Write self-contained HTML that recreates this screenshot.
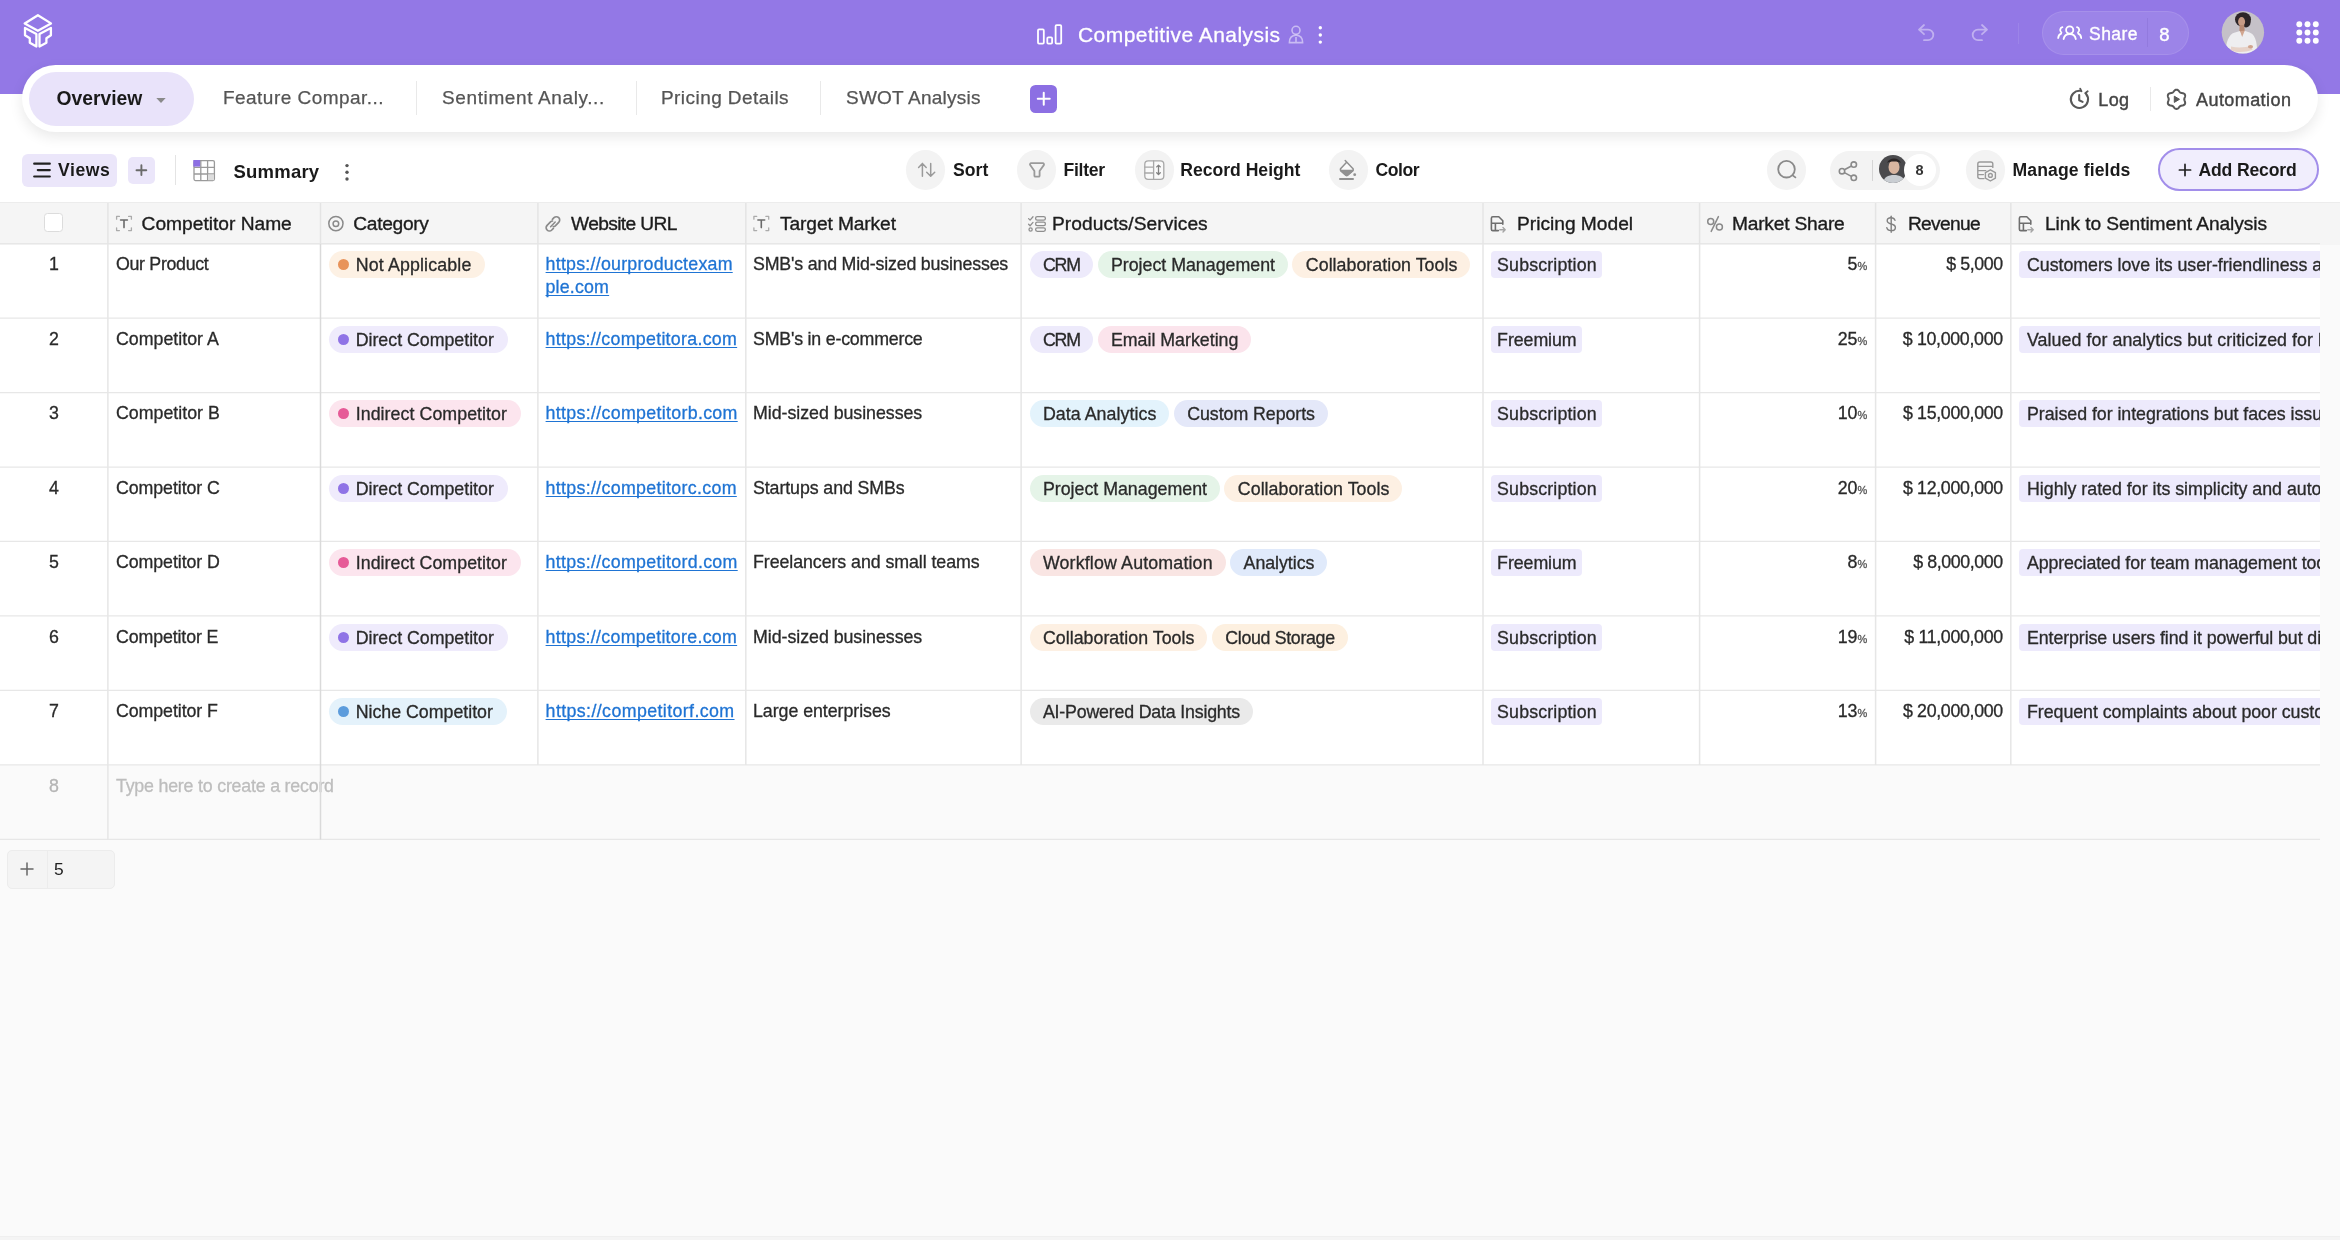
<!DOCTYPE html>
<html lang="en"><head><meta charset="utf-8"><title>Competitive Analysis</title>
<style>
*{box-sizing:border-box;margin:0;padding:0}
html,body{width:2340px;height:1240px;overflow:hidden;background:#FAFAFA}
body{position:relative;font-family:"Liberation Sans",sans-serif;color:#222;-webkit-font-smoothing:antialiased;will-change:transform}
.abs{position:absolute}
svg{position:absolute;overflow:visible}
#top{position:absolute;left:0;top:0;width:2340px;height:94px;background:#9378E6}
#white{position:absolute;left:0;top:94px;width:2340px;height:109px;background:#fff}
#tabs{position:absolute;left:22px;top:65px;width:2296px;height:67px;border-radius:34px;background:#fff;box-shadow:0 5px 14px rgba(0,0,0,.09)}
.tx{position:absolute;white-space:nowrap;line-height:1}
.tab{font-size:19px;color:#555;top:88px;-webkit-text-stroke:.25px}
.sep{position:absolute;width:1px;background:#E9E9E9}
.tb{font-weight:bold;font-size:17.600px;color:#1a1a1a;top:162px}
.circ{position:absolute;width:39.400px;height:39.400px;border-radius:50%;background:#F3F3F3;top:150.400px}
/* grid */
#ghead{position:absolute;left:0;top:202px;width:2340px;height:43px;background:#F5F5F5;border-top:1px solid #ECECEC}
.hd{position:absolute;top:214.4px;font-size:19.2px;color:#1c1c1c;white-space:nowrap;line-height:1;-webkit-text-stroke:.35px #1c1c1c}
.vl{position:absolute;width:1px;background:#E6E6E6;top:203px;height:562px}
.row{position:absolute;left:0;width:2320px;overflow:hidden}
.c{position:absolute;top:9.9px;font-size:17.8px;line-height:23px;color:#2a2a2a;white-space:nowrap;-webkit-text-stroke:.3px}
.num{left:0;width:108px;text-align:center}
.r{text-align:right}
.r small{font-size:11px;color:#555}
.url{color:#1F74D4}
.url u{text-decoration-thickness:1.2px;text-underline-offset:2px;text-decoration-skip-ink:none}
.pill{position:absolute;top:8px;height:27px;border-radius:14px;font-size:17.8px;line-height:29px;color:#2a2a2a;white-space:nowrap;-webkit-text-stroke:.3px}
.cat{padding:0 11.700px 0 28.700px}
.cat i{position:absolute;left:9px;top:8px;width:11px;height:11px;border-radius:50%}
.tags{position:absolute;top:8px;white-space:nowrap;display:flex;gap:4.4px}
.tg{position:static;display:inline-block;padding:0 13.1px 0 13.4px}
.chip{position:absolute;top:8px;height:27px;border-radius:4px;background:#EDEAFC;font-size:17.8px;line-height:29px;color:#2a2a2a;padding:0 7.7px;white-space:nowrap;-webkit-text-stroke:.3px}
.lk{padding-left:8px}
.chip:not(.lk){padding-right:3.7px}
#title{margin-left:0.00px;letter-spacing:0.436px}
#share{margin-left:-1.40px;letter-spacing:0.405px}
#s8{margin-left:-0.70px;letter-spacing:0.000px}
#ov{margin-left:0.00px;letter-spacing:0.000px}
#t1{margin-left:1.00px;letter-spacing:0.461px}
#t2{margin-left:0.00px;letter-spacing:0.619px}
#t3{margin-left:0.00px;letter-spacing:0.437px}
#t4{margin-left:0.00px;letter-spacing:0.240px}
#log{margin-left:-0.20px;letter-spacing:0.360px}
#auto{margin-left:0.00px;letter-spacing:0.430px}
#views{margin-left:0.00px;letter-spacing:0.585px}
#summary{margin-left:0.00px;letter-spacing:0.210px}
#sort{margin-left:0.00px;letter-spacing:0.060px}
#filter{margin-left:0.00px;letter-spacing:-0.270px}
#rh{margin-left:-0.80px;letter-spacing:-0.006px}
#color{margin-left:0.00px;letter-spacing:-0.473px}
#mf{margin-left:0.00px;letter-spacing:0.120px}
#ar{margin-left:0.00px;letter-spacing:-0.170px}
#c8{margin-left:0.00px;letter-spacing:0.000px}
#h1{margin-left:-0.40px;letter-spacing:-0.013px}
#h2{margin-left:-0.70px;letter-spacing:-0.320px}
#h3{margin-left:0.00px;letter-spacing:-0.630px}
#h4{margin-left:1.00px;letter-spacing:-0.111px}
#h5{margin-left:-1.00px;letter-spacing:0.068px}
#h6{margin-left:0.00px;letter-spacing:-0.015px}
#h7{margin-left:-1.10px;letter-spacing:-0.213px}
#h8{margin-left:-1.10px;letter-spacing:-0.690px}
#h9{margin-left:0.00px;letter-spacing:-0.075px}
#f5{margin-left:0.00px;letter-spacing:0.000px}
#Subscription{margin-left:-1.60px;letter-spacing:0.156px}
#Freemium{margin-left:-1.60px;letter-spacing:-0.069px}
#CRM{margin-left:0.00px;letter-spacing:-1.125px}
#Analytics{margin-left:0.00px;letter-spacing:-0.041px}
</style></head><body>
<div id="top"></div>
<div id="white"></div>
<div id="tabs"></div>

<!-- top bar -->
<svg style="left:0;top:0" width="80" height="60" viewBox="0 0 80 60" fill="none" stroke="#fff" stroke-width="2.300" stroke-linejoin="round" stroke-linecap="round">
<path d="M37.9 15.2 L51 23.4 L37.9 30.8 L24.7 23.4 Z"/>
<path d="M25 28 L36.4 34 L36.4 46.6 L29.8 42.8 L29.8 38.2 L25 35.2 Z"/>
<path d="M50.9 28 L39.5 34 L39.5 46.6 L46.4 42.8 L46.4 38.2 L50.9 35.2 Z"/>
</svg>
<svg style="left:1030px;top:15px" width="40" height="40" viewBox="1030 15 40 40" fill="none" stroke="#fff" stroke-width="1.8">
<rect x="1038" y="29.4" width="5.8" height="14.2" rx="1"/><rect x="1047.3" y="37.4" width="4.8" height="6.2" rx="1"/><rect x="1055.6" y="25.2" width="5.6" height="18.4" rx="1"/>
</svg>
<div class="tx" style="left:1078px;top:23.5px;font-size:21px;color:#fff;-webkit-text-stroke:.3px #fff" id="title">Competitive Analysis</div>
<svg style="left:1285px;top:20px" width="24" height="30" viewBox="1285 20 24 30" fill="none" stroke="rgba(255,255,255,.5)" stroke-width="1.6">
<circle cx="1296" cy="30.3" r="4"/><path d="M1289.4 42.6 c0-4.6 2.6-7.4 6.6-7.4 s6.6 2.8 6.6 7.4 Z M1296 37v5.6"/>
</svg>
<svg style="left:1315px;top:22px" width="10" height="26" viewBox="1315 22 10 26" fill="#fff"><circle cx="1320.3" cy="27.8" r="1.7"/><circle cx="1320.3" cy="35" r="1.7"/><circle cx="1320.3" cy="42.1" r="1.7"/></svg>
<svg style="left:1910px;top:18px" width="90" height="30" viewBox="1910 18 90 30" fill="none" stroke="rgba(255,255,255,.42)" stroke-width="1.8" stroke-linecap="round" stroke-linejoin="round">
<path d="M1924 25 l-5 4.6 5 4.6 M1919.4 29.6 h8.6 a5.3 5.3 0 0 1 0 10.6 h-4"/>
<path d="M1982 25 l5 4.6 -5 4.6 M1986.600 29.6 h-8.6 a5.3 5.3 0 0 0 0 10.6 h4"/>
</svg>
<div class="sep" style="left:2018px;top:23px;height:21px;background:rgba(255,255,255,.09)"></div>
<div class="abs" style="left:2041.5px;top:10.5px;width:147px;height:44px;border-radius:22px;background:rgba(255,255,255,.09);border:1.500px solid rgba(255,255,255,.1)"></div>
<svg style="left:2055px;top:22px" width="30" height="22" viewBox="2055 22 30 22" fill="none" stroke="#fff" stroke-width="1.8" stroke-linecap="round">
<circle cx="2069.7" cy="30" r="3.6"/><path d="M2063.6 39 c.6-3.400 3-5 6.100-5 s5.500 1.600 6.100 5"/>
<path d="M2062.4 27.200 a3 3 0 0 0-1 5.300 M2058.200 38 c.2-2.400 1.200-3.800 3-4.400"/>
<path d="M2077 27.200 a3 3 0 0 1 1 5.300 M2081.200 38 c-.2-2.400-1.200-3.800-3-4.400"/>
</svg>
<div class="tx" style="left:2090.5px;top:26px;font-size:17.500px;color:#fff;-webkit-text-stroke:.35px #fff" id="share">Share</div>
<div class="sep" style="left:2147px;top:18px;height:29px;background:rgba(70,45,150,.11)"></div>
<div class="tx" style="left:2160px;top:26px;font-size:18.500px;color:#fff;-webkit-text-stroke:.4px #fff" id="s8">8</div>
<!-- avatar -->
<svg style="left:2221px;top:11px" width="44" height="44" viewBox="0 0 44 44">
<defs><clipPath id="av"><circle cx="21.900" cy="21.300" r="21.200"/></clipPath></defs>
<g clip-path="url(#av)"><rect width="44" height="44" fill="#C5C1C8"/>
<ellipse cx="22" cy="8.600" rx="8" ry="7.400" fill="#2d2528"/><ellipse cx="25" cy="11.500" rx="4.500" ry="5" fill="#2d2528"/>
<ellipse cx="20.600" cy="10.800" rx="3.500" ry="4.700" fill="#c79a84"/>
<path d="M18.600 14 h4.600 l.6 7 h-5.400 Z" fill="#b98a73"/>
<path d="M4.500 44 c0-12 3-21 9.500-22.500 l5-1.500 2.200 4 2.400-4.200 5 1.800 c6 2 8 11 7.400 22.400 Z" fill="#EEEEF0"/>
<path d="M19 20 l2.200 6 2.400-6.200 Z" fill="#d2a690"/>
<path d="M10 35.600 c6 1.400 14 1.400 20.500-1 l1 4.200 c-7 2.800-15 2.800-21.500 1 Z" fill="#e6d2c8"/>
<ellipse cx="29.500" cy="35.800" rx="2.600" ry="1.700" fill="#d0a48e"/>
</g></svg>
<svg style="left:2296px;top:21px" width="24" height="24" viewBox="2296 21 24 24" fill="#fff">
<circle cx="2299.3" cy="24.2" r="2.950"/><circle cx="2307.5" cy="24.2" r="2.950"/><circle cx="2315.8" cy="24.2" r="2.950"/><circle cx="2299.3" cy="32.5" r="2.950"/><circle cx="2307.5" cy="32.5" r="2.950"/><circle cx="2315.8" cy="32.5" r="2.950"/><circle cx="2299.3" cy="40.7" r="2.950"/><circle cx="2307.5" cy="40.7" r="2.950"/><circle cx="2315.8" cy="40.7" r="2.950"/>
</svg>

<!-- tabs -->
<div class="abs" style="left:29px;top:71.800px;width:165px;height:54px;border-radius:27px;background:#E9E3FA"></div>
<div class="tx" style="left:56.500px;top:89.300px;font-size:19.300px;font-weight:bold;color:#1a1a1a" id="ov">Overview</div>
<svg style="left:154px;top:94.800px" width="14" height="10" viewBox="0 0 14 10"><path d="M2.300 3 h9.400 l-4.700 5 Z" fill="#8a8a8a"/></svg>
<div class="tx tab" style="left:222px" id="t1">Feature Compar...</div>
<div class="sep" style="left:416px;top:81px;height:34px"></div>
<div class="tx tab" style="left:442px" id="t2">Sentiment Analy...</div>
<div class="sep" style="left:636px;top:81px;height:34px"></div>
<div class="tx tab" style="left:661px" id="t3">Pricing Details</div>
<div class="sep" style="left:820px;top:81px;height:34px"></div>
<div class="tx tab" style="left:846px" id="t4">SWOT Analysis</div>
<div class="abs" style="left:1029.500px;top:85px;width:27.500px;height:27.500px;border-radius:5.500px;background:#8C6FE3"></div>
<svg style="left:1029.500px;top:85px" width="27.500" height="27.500" viewBox="0 0 27.500 27.500" stroke="#fff" stroke-width="2" stroke-linecap="round"><path d="M13.750 7.800 v12 M7.750 13.800 h12"/></svg>
<svg style="left:2066px;top:86px" width="26" height="26" viewBox="2066 86 26 26" fill="none" stroke="#585858" stroke-width="2.100" stroke-linecap="round" stroke-linejoin="round">
<path d="M2086 93.800 a8.600 8.600 0 1 1-5.600-3"/><path d="M2079.200 95 v5.200 l3.400 1.700"/><path d="M2080.200 88.600 l1.300 2.700 M2087.700 91.300 l-2.500 1.900" stroke-width="1.800"/>
</svg>
<div class="tx" style="left:2098.500px;top:91px;font-size:18px;color:#444;-webkit-text-stroke:.4px" id="log">Log</div>
<div class="sep" style="left:2150px;top:87px;height:24px"></div>
<svg style="left:2164px;top:87px" width="26" height="26" viewBox="2164 87 26 26" fill="none" stroke="#585858" stroke-width="2" stroke-linejoin="round">
<path d="M2176.50 89.65 L2177.13 89.74 L2177.72 90.01 L2178.27 90.41 L2178.75 90.90 L2179.18 91.41 L2179.57 91.88 L2179.96 92.28 L2180.38 92.59 L2180.85 92.80 L2181.39 92.93 L2182.00 93.03 L2182.65 93.15 L2183.31 93.32 L2183.94 93.59 L2184.46 93.98 L2184.86 94.47 L2185.09 95.06 L2185.16 95.71 L2185.08 96.39 L2184.90 97.05 L2184.68 97.67 L2184.46 98.25 L2184.31 98.79 L2184.25 99.30 L2184.31 99.81 L2184.46 100.35 L2184.68 100.93 L2184.90 101.55 L2185.08 102.21 L2185.16 102.89 L2185.09 103.54 L2184.86 104.12 L2184.46 104.62 L2183.94 105.01 L2183.31 105.28 L2182.65 105.45 L2182.00 105.57 L2181.39 105.67 L2180.85 105.80 L2180.38 106.01 L2179.96 106.32 L2179.57 106.72 L2179.18 107.19 L2178.75 107.70 L2178.27 108.19 L2177.72 108.59 L2177.13 108.86 L2176.50 108.95 L2175.87 108.86 L2175.28 108.59 L2174.73 108.19 L2174.25 107.70 L2173.82 107.19 L2173.43 106.72 L2173.04 106.32 L2172.62 106.01 L2172.15 105.80 L2171.61 105.67 L2171.00 105.57 L2170.35 105.45 L2169.69 105.28 L2169.06 105.01 L2168.54 104.62 L2168.14 104.12 L2167.91 103.54 L2167.84 102.89 L2167.92 102.21 L2168.10 101.55 L2168.32 100.93 L2168.54 100.35 L2168.69 99.81 L2168.75 99.30 L2168.69 98.79 L2168.54 98.25 L2168.32 97.67 L2168.10 97.05 L2167.92 96.39 L2167.84 95.71 L2167.91 95.06 L2168.14 94.47 L2168.54 93.98 L2169.06 93.59 L2169.69 93.32 L2170.35 93.15 L2171.00 93.03 L2171.61 92.93 L2172.15 92.80 L2172.62 92.59 L2173.04 92.28 L2173.43 91.88 L2173.82 91.41 L2174.25 90.90 L2174.73 90.41 L2175.28 90.01 L2175.87 89.74 Z"/>
<path d="M2174.300 96.200 l5.200 3.100 -5.200 3.100 Z" fill="#585858" stroke-width="1"/>
</svg>
<div class="tx" style="left:2196px;top:91px;font-size:18px;color:#444;-webkit-text-stroke:.4px" id="auto">Automation</div>

<!-- toolbar -->
<div class="abs" style="left:22px;top:153.500px;width:95px;height:33px;border-radius:6px;background:#EBE6FA"></div>
<svg style="left:32px;top:160px" width="20" height="20" viewBox="32 160 20 20" stroke="#222" stroke-width="2.200" stroke-linecap="round"><path d="M34.200 163.700 h15.600 M37.800 170.100 h12 M34.200 176.500 h15.600"/></svg>
<div class="tx tb" style="left:58px" id="views">Views</div>
<div class="abs" style="left:128px;top:157px;width:27px;height:26.500px;border-radius:5px;background:#EBE6FA"></div>
<svg style="left:128px;top:157px" width="27" height="26.500" viewBox="0 0 27 26.500" stroke="#6a6a6a" stroke-width="1.900" stroke-linecap="round"><path d="M13.400 8.300 v9.800 M8.500 13.200 h9.800"/></svg>
<div class="sep" style="left:175px;top:155px;height:30px;background:#E4E4E4"></div>
<svg style="left:192px;top:158px" width="26" height="26" viewBox="192 158 26 26" fill="none" stroke="#9a9a9a" stroke-width="1.300">
<rect x="194" y="160.600" width="20.400" height="20" rx="1.500"/><path d="M200.800 160.600 v20 M207.600 160.600 v20 M194 167.300 h20.400 M194 174 h20.400"/>
<rect x="193.300" y="160" width="6.800" height="6.600" fill="#8C6FE3" stroke="none"/><rect x="208" y="174.400" width="6" height="5.800" fill="#ddd" stroke="none"/>
</svg>
<div class="tx" style="left:233.500px;top:162.500px;font-weight:bold;font-size:18.500px;color:#1a1a1a" id="summary">Summary</div>
<svg style="left:342px;top:160px" width="10" height="24" viewBox="342 160 10 24" fill="#555"><circle cx="347" cy="165.600" r="1.700"/><circle cx="347" cy="172.300" r="1.700"/><circle cx="347" cy="179" r="1.700"/></svg>

<div class="circ" style="left:906px"></div>
<svg style="left:915px;top:160px" width="24" height="20" viewBox="915 160 24 20" fill="none" stroke="#9a9a9a" stroke-width="1.500" stroke-linecap="round" stroke-linejoin="round">
<path d="M922.400 176.200 v-12.600 M918.600 167.400 l3.800-3.900 3.800 3.900 M930.700 163.400 v12.600 M926.700 172.300 l4 3.900 4-3.900"/></svg>
<div class="tx tb" style="left:953px" id="sort">Sort</div>
<div class="circ" style="left:1017px"></div>
<svg style="left:1026px;top:160px" width="24" height="20" viewBox="1026 160 24 20" fill="none" stroke="#9a9a9a" stroke-width="1.800" stroke-linejoin="round">
<path d="M1031.200 163.200 h11.600 a1.200 1.200 0 0 1 1 1.900 l-4.200 6 v4.600 a1 1 0 0 1-1 1 h-3.200 a1 1 0 0 1-1-1 v-4.600 l-4.200-6 a1.200 1.200 0 0 1 1-1.900 Z"/></svg>
<div class="tx tb" style="left:1063.500px" id="filter">Filter</div>
<div class="circ" style="left:1134.500px"></div>
<svg style="left:1142px;top:158px" width="26" height="24" viewBox="1142 158 26 24" fill="none" stroke="#a8a8a8" stroke-width="1.300" stroke-linecap="round" stroke-linejoin="round">
<rect x="1144.800" y="160.900" width="19" height="18.400" rx="3.400" fill="#F9F9F9"/><path d="M1153.600 160.900 v18.400 M1144.800 167.100 h8.800 M1144.800 173 h8.800"/>
<path d="M1158.500 165.200 v9.200 M1156.700 166.900 l1.800-1.800 1.800 1.800 M1156.700 172.800 l1.800 1.800 1.800-1.800" stroke="#808080"/></svg>
<div class="tx tb" style="left:1181px" id="rh">Record Height</div>
<div class="circ" style="left:1329px"></div>
<svg style="left:1336px;top:158px" width="26" height="26" viewBox="1336 158 26 26" fill="none" stroke="#909090" stroke-width="1.500" stroke-linejoin="round" stroke-linecap="round">
<path d="M1345.200 160.600 l7.600 7.800 a1.400 1.400 0 0 1 0 2 l-5 4.600 a1.600 1.600 0 0 1-2.200 0 l-4.800-4.600 a1.400 1.400 0 0 1 0-2 l5.600-6" fill="#F9F9F9"/>
<path d="M1340.600 170.600 h12.400 l-5.400 4.600 a1.400 1.400 0 0 1-1.800 0 Z" fill="#909090"/><path d="M1340 179 h13" stroke-width="2"/><circle cx="1354.700" cy="174.700" r="1.400" fill="#909090" stroke="none"/></svg>
<div class="tx tb" style="left:1375.500px" id="color">Color</div>

<div class="circ" style="left:1767px"></div>
<svg style="left:1774px;top:158px" width="26" height="26" viewBox="1774 158 26 26" fill="none" stroke="#8a8a8a" stroke-width="1.800" stroke-linecap="round"><circle cx="1786.500" cy="169.200" r="8.300"/><path d="M1793 175.600 l2.400 1.800"/></svg>
<div class="abs" style="left:1830px;top:150.500px;width:110px;height:39px;border-radius:20px;background:#F3F3F3"></div>
<svg style="left:1836px;top:159px" width="24" height="24" viewBox="1836 159 24 24" fill="none" stroke="#8a8a8a" stroke-width="1.600"><circle cx="1853.800" cy="164.600" r="2.700"/><circle cx="1842" cy="171.200" r="2.700"/><circle cx="1853.800" cy="177.800" r="2.700"/><path d="M1844.400 169.800 l7-3.800 M1844.400 172.600 l7 3.800"/></svg>
<div class="sep" style="left:1871.500px;top:160px;height:21px;background:#D5D5D5"></div>
<svg style="left:1879px;top:155px" width="28" height="28" viewBox="0 0 28 28"><defs><clipPath id="av2"><circle cx="14" cy="14" r="14"/></clipPath></defs>
<g clip-path="url(#av2)"><rect width="28" height="28" fill="#4a4a4d"/><ellipse cx="15" cy="12" rx="5.500" ry="7" fill="#d8b5a0"/><path d="M8 8 c2-6 12-6 14 0 c-2-2-12-2-14 0Z" fill="#2a2425"/><path d="M4 28 c1-6 5-8 11-8 s10 2 11 8Z" fill="#c9cdd2"/></g></svg>
<div class="abs" style="left:1904px;top:154px;width:32px;height:32px;border-radius:50%;background:#fff"></div>
<div class="tx" style="left:1915.500px;top:162.500px;font-size:14.500px;font-weight:bold;color:#333" id="c8">8</div>
<div class="circ" style="left:1966px"></div>
<svg style="left:1974px;top:158px" width="26" height="26" viewBox="1974 158 26 26" fill="none" stroke="#9a9a9a" stroke-width="1.400" stroke-linejoin="round" stroke-linecap="round">
<path d="M1984 178.600 h-4.200 a2 2 0 0 1-2-2 v-12.600 a2 2 0 0 1 2-2 h11 a2 2 0 0 1 2 2 v3.400 M1977.800 166.400 h15 M1977.800 170.600 h8 M1977.800 174.600 h5.600"/>
<path d="M1990.400 169.800 l5 2.800 v5.600 l-5 2.800 -5-2.800 v-5.600 Z"/><circle cx="1990.400" cy="175.400" r="1.900"/></svg>
<div class="tx tb" style="left:2012.500px" id="mf">Manage fields</div>
<div class="abs" style="left:2158px;top:148px;width:160.500px;height:43px;border-radius:22px;background:#F1EEFD;border:2px solid #A28EEA"></div>
<svg style="left:2178px;top:163px" width="14" height="14" viewBox="0 0 14 14" stroke="#222" stroke-width="1.700" stroke-linecap="round"><path d="M7 1.400 v11.200 M1.400 7 h11.200"/></svg>
<div class="tx tb" style="left:2198.500px" id="ar">Add Record</div>

<!-- grid header -->
<div id="ghead"></div>
<div class="abs" style="left:44.300px;top:213.300px;width:18.500px;height:18.500px;border-radius:3.500px;background:#fff;border:1px solid #DCDCDC"></div>
<div class="hd" style="left:142px" id="h1">Competitor Name</div>
<div class="hd" style="left:354px" id="h2">Category</div>
<div class="hd" style="left:571px" id="h3">Website URL</div>
<div class="hd" style="left:779px" id="h4">Target Market</div>
<div class="hd" style="left:1053px" id="h5">Products/Services</div>
<div class="hd" style="left:1517px" id="h6">Pricing Model</div>
<div class="hd" style="left:1733px" id="h7">Market Share</div>
<div class="hd" style="left:1909px" id="h8">Revenue</div>
<div class="hd" style="left:2045px" id="h9">Link to Sentiment Analysis</div>
<svg style="left:0;top:203px" width="2340" height="40" viewBox="0 203 2340 40" fill="none" stroke-linecap="round" stroke-linejoin="round">
<!-- text icon 1 -->
<g id="ticon"><path d="M116.600 219.200 v-2.800 h2.800 M128.600 216.400 h2.800 v2.800 M131.400 227.800 v2.800 h-2.800 M119.400 230.600 h-2.800 v-2.800" stroke="#ababab" stroke-width="1.300"/>
<path d="M120.600 220 h6.800 M124 220 v7.600" stroke="#6a6a6a" stroke-width="1.600"/></g>
<use href="#ticon" x="637.300"/>
<!-- category -->
<circle cx="335.900" cy="223.600" r="7.100" stroke="#8a8a8a" stroke-width="1.500"/><circle cx="335.900" cy="223.700" r="2.800" stroke="#8a8a8a" stroke-width="1.500"/>
<!-- link -->
<g stroke="#8a8a8a" stroke-width="1.700"><path d="M552.400 219.300 l1.600-1.600 a3.300 3.300 0 0 1 4.700 4.700 l-3.400 3.400 a3.300 3.300 0 0 1-2 .9"/><path d="M553.400 228.400 l-1.600 1.600 a3.300 3.300 0 0 1-4.700-4.700 l3.400-3.400 a3.300 3.300 0 0 1 2-.9" /><path d="M550.600 226.800 l4.600-4.800" stroke-width="1.500"/></g>
<!-- multi-select -->
<g stroke="#8f8f8f" stroke-width="1.300"><path d="M1028.600 218.600 l1.500 1.500 2.900-3.300 M1028.600 224.200 l1.500 1.500 2.900-3.300"/><circle cx="1030.600" cy="229.500" r="1.600"/>
<rect x="1035.600" y="216.600" width="9.800" height="3.500" rx="1.700"/><rect x="1035.600" y="222.200" width="9.800" height="3.500" rx="1.700"/><rect x="1035.600" y="227.800" width="9.800" height="3.500" rx="1.700"/></g>
<!-- lookup icons -->
<g id="lk"><path d="M1498.400 230.600 h-5.600 a1.400 1.400 0 0 1-1.400-1.400 v-11 a1.400 1.400 0 0 1 1.400-1.400 h6 l4 4 v3.400 M1491.400 223.200 h11.400 M1495.400 223.200 v7.400" stroke="#6e6e6e" stroke-width="1.600"/>
<path d="M1499.800 229.800 h4.800 M1503 227.600 l2.200 2.200 -2.200 2.200" stroke="#a5a5a5" stroke-width="1.400"/></g>
<use href="#lk" x="528"/>
<!-- percent -->
<g stroke="#8a8a8a" stroke-width="1.500"><circle cx="1710.700" cy="221.600" r="3"/><circle cx="1719.400" cy="227" r="3"/><path d="M1718.400 216.600 l-7.200 14.800"/></g>
<!-- dollar -->
<g stroke="#808080" stroke-width="1.400"><path d="M1895 220.400 c-.6-1.800-2-2.600-4-2.600 c-2.200 0-3.800 1.100-3.800 3 c0 4.400 8.200 2 8.200 6.600 c0 2-1.800 3.200-4.200 3.200 c-2.400 0-4-1-4.400-3"/><path d="M1891.200 216.200 v16"/></g>
</svg>


<!-- rows -->
<div class="abs" style="left:0;top:245px;width:2320px;height:520px;background:#fff"></div>
<div class="row" style="top:243px;height:75px">
<div class="c num"><span style="position:relative;left:0.00px;letter-spacing:0.000px">1</span></div>
<div class="c t" style="left:116px"><span style="position:relative;left:0.00px;letter-spacing:-0.306px">Our Product</span></div>
<div class="pill cat" style="left:329px;background:#FDF1E4"><i style="background:#E8935A"></i><span style="position:relative;left:-2.00px;letter-spacing:0.152px">Not Applicable</span></div>
<div class="c url" style="left:545.5px"><u><span style="position:relative;left:0.10px;letter-spacing:0.239px">https://ourproductexam</span></u><br><u><span style="position:relative;left:0.00px;letter-spacing:0.195px">ple.com</span></u></div>
<div class="c t" style="left:754px"><span style="position:relative;left:-1.00px;letter-spacing:-0.176px">SMB&#x27;s and Mid-sized businesses</span></div>
<div class="tags" style="left:1029.5px"><span class="pill tg" style="background:#EDEAFB"><span style="position:relative;left:0.00px;letter-spacing:-1.125px">CRM</span></span><span class="pill tg" style="background:#E5F4E8"><span style="position:relative;left:0.00px;letter-spacing:-0.000px">Project Management</span></span><span class="pill tg" style="background:#FDF0E3"><span style="position:relative;left:0.00px;letter-spacing:0.030px">Collaboration Tools</span></span></div>
<div class="chip" style="left:1491px"><span style="position:relative;left:-1.60px;letter-spacing:0.156px">Subscription</span></div>
<div class="c r" style="right:452.79999999999995px"><span style="position:relative;left:0.00px;letter-spacing:0.000px">5</span><small>%</small></div>
<div class="c r" style="right:317.20000000000005px"><span style="position:relative;left:0.00px;letter-spacing:-0.390px">$ 5,000</span></div>
<div class="chip lk" style="left:2019px"><span style="position:relative;left:0.00px;letter-spacing:-0.039px">Customers love its user-friendliness and simple onboarding</span></div>
</div>
<div class="row" style="top:318px;height:74px">
<div class="c num"><span style="position:relative;left:0.00px;letter-spacing:0.000px">2</span></div>
<div class="c t" style="left:116px"><span style="position:relative;left:0.00px;letter-spacing:-0.000px">Competitor A</span></div>
<div class="pill cat" style="left:329px;background:#EFEBFC"><i style="background:#8F73E6"></i><span style="position:relative;left:-2.00px;letter-spacing:-0.011px">Direct Competitor</span></div>
<div class="c url" style="left:545.5px"><u><span style="position:relative;left:0.10px;letter-spacing:0.293px">https://competitora.com</span></u></div>
<div class="c t" style="left:754px"><span style="position:relative;left:-1.00px;letter-spacing:-0.200px">SMB&#x27;s in e-commerce</span></div>
<div class="tags" style="left:1029.5px"><span class="pill tg" style="background:#EDEAFB"><span style="position:relative;left:0.00px;letter-spacing:-1.125px">CRM</span></span><span class="pill tg" style="background:#FBE4EC"><span style="position:relative;left:0.00px;letter-spacing:0.000px">Email Marketing</span></span></div>
<div class="chip" style="left:1491px"><span style="position:relative;left:-1.60px;letter-spacing:-0.069px">Freemium</span></div>
<div class="c r" style="right:452.79999999999995px"><span style="position:relative;left:0.00px;letter-spacing:0.000px">25</span><small>%</small></div>
<div class="c r" style="right:317.20000000000005px"><span style="position:relative;left:0.00px;letter-spacing:-0.310px">$ 10,000,000</span></div>
<div class="chip lk" style="left:2019px"><span style="position:relative;left:0.00px;letter-spacing:0.070px">Valued for analytics but criticized for high pricing tiers</span></div>
</div>
<div class="row" style="top:392px;height:75px">
<div class="c num"><span style="position:relative;left:0.00px;letter-spacing:0.000px">3</span></div>
<div class="c t" style="left:116px"><span style="position:relative;left:0.00px;letter-spacing:-0.001px">Competitor B</span></div>
<div class="pill cat" style="left:329px;background:#FCE5EE"><i style="background:#E65A97"></i><span style="position:relative;left:-2.00px;letter-spacing:0.060px">Indirect Competitor</span></div>
<div class="c url" style="left:545.5px"><u><span style="position:relative;left:0.10px;letter-spacing:0.318px">https://competitorb.com</span></u></div>
<div class="c t" style="left:754px"><span style="position:relative;left:-1.00px;letter-spacing:-0.038px">Mid-sized businesses</span></div>
<div class="tags" style="left:1029.5px"><span class="pill tg" style="background:#E3F3FC"><span style="position:relative;left:0.00px;letter-spacing:0.055px">Data Analytics</span></span><span class="pill tg" style="background:#E4E8F9"><span style="position:relative;left:0.00px;letter-spacing:-0.056px">Custom Reports</span></span></div>
<div class="chip" style="left:1491px"><span style="position:relative;left:-1.60px;letter-spacing:0.156px">Subscription</span></div>
<div class="c r" style="right:452.79999999999995px"><span style="position:relative;left:0.00px;letter-spacing:0.000px">10</span><small>%</small></div>
<div class="c r" style="right:317.20000000000005px"><span style="position:relative;left:0.00px;letter-spacing:-0.328px">$ 15,000,000</span></div>
<div class="chip lk" style="left:2019px"><span style="position:relative;left:0.00px;letter-spacing:-0.039px">Praised for integrations but faces issues with reliability</span></div>
</div>
<div class="row" style="top:467px;height:74px">
<div class="c num"><span style="position:relative;left:0.00px;letter-spacing:0.000px">4</span></div>
<div class="c t" style="left:116px"><span style="position:relative;left:0.00px;letter-spacing:-0.082px">Competitor C</span></div>
<div class="pill cat" style="left:329px;background:#EFEBFC"><i style="background:#8F73E6"></i><span style="position:relative;left:-2.00px;letter-spacing:-0.011px">Direct Competitor</span></div>
<div class="c url" style="left:545.5px"><u><span style="position:relative;left:0.10px;letter-spacing:0.322px">https://competitorc.com</span></u></div>
<div class="c t" style="left:754px"><span style="position:relative;left:-1.00px;letter-spacing:-0.090px">Startups and SMBs</span></div>
<div class="tags" style="left:1029.5px"><span class="pill tg" style="background:#E5F4E8"><span style="position:relative;left:0.00px;letter-spacing:-0.000px">Project Management</span></span><span class="pill tg" style="background:#FDF0E3"><span style="position:relative;left:0.00px;letter-spacing:0.030px">Collaboration Tools</span></span></div>
<div class="chip" style="left:1491px"><span style="position:relative;left:-1.60px;letter-spacing:0.156px">Subscription</span></div>
<div class="c r" style="right:452.79999999999995px"><span style="position:relative;left:0.00px;letter-spacing:0.000px">20</span><small>%</small></div>
<div class="c r" style="right:317.20000000000005px"><span style="position:relative;left:0.00px;letter-spacing:-0.328px">$ 12,000,000</span></div>
<div class="chip lk" style="left:2019px"><span style="position:relative;left:0.00px;letter-spacing:-0.000px">Highly rated for its simplicity and automation features</span></div>
</div>
<div class="row" style="top:541px;height:75px">
<div class="c num"><span style="position:relative;left:0.00px;letter-spacing:0.000px">5</span></div>
<div class="c t" style="left:116px"><span style="position:relative;left:0.00px;letter-spacing:-0.082px">Competitor D</span></div>
<div class="pill cat" style="left:329px;background:#FCE5EE"><i style="background:#E65A97"></i><span style="position:relative;left:-2.00px;letter-spacing:0.060px">Indirect Competitor</span></div>
<div class="c url" style="left:545.5px"><u><span style="position:relative;left:0.10px;letter-spacing:0.318px">https://competitord.com</span></u></div>
<div class="c t" style="left:754px"><span style="position:relative;left:-1.00px;letter-spacing:-0.063px">Freelancers and small teams</span></div>
<div class="tags" style="left:1029.5px"><span class="pill tg" style="background:#F9E5E3"><span style="position:relative;left:0.00px;letter-spacing:0.165px">Workflow Automation</span></span><span class="pill tg" style="background:#E0EAFB"><span style="position:relative;left:0.00px;letter-spacing:-0.041px">Analytics</span></span></div>
<div class="chip" style="left:1491px"><span style="position:relative;left:-1.60px;letter-spacing:-0.069px">Freemium</span></div>
<div class="c r" style="right:452.79999999999995px"><span style="position:relative;left:0.00px;letter-spacing:0.000px">8</span><small>%</small></div>
<div class="c r" style="right:317.20000000000005px"><span style="position:relative;left:0.00px;letter-spacing:-0.396px">$ 8,000,000</span></div>
<div class="chip lk" style="left:2019px"><span style="position:relative;left:0.00px;letter-spacing:-0.127px">Appreciated for team management tools and flexibility</span></div>
</div>
<div class="row" style="top:616px;height:74px">
<div class="c num"><span style="position:relative;left:0.00px;letter-spacing:0.000px">6</span></div>
<div class="c t" style="left:116px"><span style="position:relative;left:0.00px;letter-spacing:-0.123px">Competitor E</span></div>
<div class="pill cat" style="left:329px;background:#EFEBFC"><i style="background:#8F73E6"></i><span style="position:relative;left:-2.00px;letter-spacing:-0.011px">Direct Competitor</span></div>
<div class="c url" style="left:545.5px"><u><span style="position:relative;left:0.10px;letter-spacing:0.293px">https://competitore.com</span></u></div>
<div class="c t" style="left:754px"><span style="position:relative;left:-1.00px;letter-spacing:-0.038px">Mid-sized businesses</span></div>
<div class="tags" style="left:1029.5px"><span class="pill tg" style="background:#FDF0E3"><span style="position:relative;left:0.00px;letter-spacing:0.030px">Collaboration Tools</span></span><span class="pill tg" style="background:#FDF0E0"><span style="position:relative;left:0.00px;letter-spacing:-0.326px">Cloud Storage</span></span></div>
<div class="chip" style="left:1491px"><span style="position:relative;left:-1.60px;letter-spacing:0.156px">Subscription</span></div>
<div class="c r" style="right:452.79999999999995px"><span style="position:relative;left:0.00px;letter-spacing:0.000px">19</span><small>%</small></div>
<div class="c r" style="right:317.20000000000005px"><span style="position:relative;left:0.00px;letter-spacing:-0.328px">$ 11,000,000</span></div>
<div class="chip lk" style="left:2019px"><span style="position:relative;left:0.00px;letter-spacing:-0.087px">Enterprise users find it powerful but difficult to learn</span></div>
</div>
<div class="row" style="top:690px;height:75px">
<div class="c num"><span style="position:relative;left:0.00px;letter-spacing:0.000px">7</span></div>
<div class="c t" style="left:116px"><span style="position:relative;left:0.00px;letter-spacing:-0.083px">Competitor F</span></div>
<div class="pill cat" style="left:329px;background:#E4F2FB"><i style="background:#5C9CDC"></i><span style="position:relative;left:-2.00px;letter-spacing:-0.012px">Niche Competitor</span></div>
<div class="c url" style="left:545.5px"><u><span style="position:relative;left:0.10px;letter-spacing:0.394px">https://competitorf.com</span></u></div>
<div class="c t" style="left:754px"><span style="position:relative;left:-1.00px;letter-spacing:-0.045px">Large enterprises</span></div>
<div class="tags" style="left:1029.5px"><span class="pill tg" style="background:#EAEAEA"><span style="position:relative;left:0.00px;letter-spacing:-0.188px">AI-Powered Data Insights</span></span></div>
<div class="chip" style="left:1491px"><span style="position:relative;left:-1.60px;letter-spacing:0.156px">Subscription</span></div>
<div class="c r" style="right:452.79999999999995px"><span style="position:relative;left:0.00px;letter-spacing:0.000px">13</span><small>%</small></div>
<div class="c r" style="right:317.20000000000005px"><span style="position:relative;left:0.00px;letter-spacing:-0.328px">$ 20,000,000</span></div>
<div class="chip lk" style="left:2019px"><span style="position:relative;left:0.00px;letter-spacing:-0.042px">Frequent complaints about poor customer support</span></div>
</div>
<div class="row" style="top:765px;height:75px;background:#FAFAFA;width:2320px">
<div class="c num" style="color:#B5B5B5">8</div>
<div class="c" style="left:116px;color:#BDBDBD"><span style="position:relative;left:0.00px;letter-spacing:-0.199px">Type here to create a record</span></div>
</div>
<!-- vertical lines -->
<svg style="left:0;top:0" width="2340" height="860" viewBox="0 0 2340 860" fill="none">
<path d="M0 243.60 H2320" stroke="#E7E7E7" stroke-width="1.25"/>
<path d="M0 318.07 H2320" stroke="#E7E7E7" stroke-width="1.25"/>
<path d="M0 392.54 H2320" stroke="#E7E7E7" stroke-width="1.25"/>
<path d="M0 467.01 H2320" stroke="#E7E7E7" stroke-width="1.25"/>
<path d="M0 541.48 H2320" stroke="#E7E7E7" stroke-width="1.25"/>
<path d="M0 615.95 H2320" stroke="#E7E7E7" stroke-width="1.25"/>
<path d="M0 690.42 H2320" stroke="#E7E7E7" stroke-width="1.25"/>
<path d="M0 764.89 H2320" stroke="#E7E7E7" stroke-width="1.25"/>
<path d="M0 839.36 H2320" stroke="#E7E7E7" stroke-width="1.25"/>
<path d="M107.9 203 V244" stroke="#E4E4E4" stroke-width="1.5"/>
<path d="M107.9 244 V839.4" stroke="#E6E6E6" stroke-width="1.5"/>
<path d="M320.5 203 V244" stroke="#E4E4E4" stroke-width="1.5"/>
<path d="M320.5 244 V839.4" stroke="#DADADA" stroke-width="1.5"/>
<path d="M537.9 203 V244" stroke="#E4E4E4" stroke-width="1.5"/>
<path d="M537.9 244 V765" stroke="#E6E6E6" stroke-width="1.5"/>
<path d="M745.8 203 V244" stroke="#E4E4E4" stroke-width="1.5"/>
<path d="M745.8 244 V765" stroke="#E6E6E6" stroke-width="1.5"/>
<path d="M1021.1 203 V244" stroke="#E4E4E4" stroke-width="1.5"/>
<path d="M1021.1 244 V765" stroke="#E6E6E6" stroke-width="1.5"/>
<path d="M1483.0 203 V244" stroke="#E4E4E4" stroke-width="1.5"/>
<path d="M1483.0 244 V765" stroke="#E6E6E6" stroke-width="1.5"/>
<path d="M1699.6 203 V244" stroke="#E4E4E4" stroke-width="1.5"/>
<path d="M1699.6 244 V765" stroke="#E6E6E6" stroke-width="1.5"/>
<path d="M1875.6 203 V244" stroke="#E4E4E4" stroke-width="1.5"/>
<path d="M1875.6 244 V765" stroke="#E6E6E6" stroke-width="1.5"/>
<path d="M2010.8 203 V244" stroke="#E4E4E4" stroke-width="1.5"/>
<path d="M2010.8 244 V765" stroke="#E6E6E6" stroke-width="1.5"/>
</svg>
<!-- footer add -->
<div class="abs" style="left:7px;top:850px;width:107.500px;height:38.500px;border-radius:5px;background:#F4F4F4;border:1px solid #ECECEC"></div>
<div class="sep" style="left:47px;top:851px;height:36.500px;background:#ECECEC"></div>
<svg style="left:20px;top:862px" width="14" height="14" viewBox="0 0 14 14" stroke="#666" stroke-width="1.500" stroke-linecap="round"><path d="M7 1 v12 M1 7 h12"/></svg>
<div class="tx" style="left:54px;top:860.500px;font-size:17.400px;color:#222" id="f5">5</div>
<div class="abs" style="left:0;top:1236px;width:2340px;height:4px;background:#F4F4F4;border-top:1px solid #EFEFEF"></div>
</body></html>
